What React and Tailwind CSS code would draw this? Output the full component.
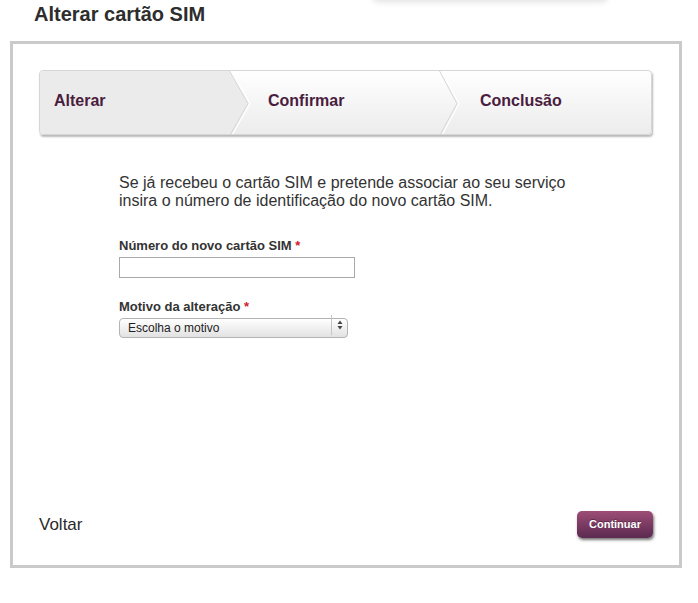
import React from 'react';

const StepBar = () => {
  return (
    <div className="relative h-[65px] w-[613px] rounded-[4px] border border-[#d6d6d6] bg-gradient-to-b from-white to-[#ececec] shadow-[1px_2px_2px_rgba(0,0,0,0.28)] overflow-hidden">
      {/* active step fill and chevron separators */}
      <svg className="absolute inset-0" width="613" height="65" viewBox="0 0 613 65">
        <polygon points="0,0 189,0 208,32.5 189,65 0,65" fill="#ebebeb" />
        <polyline points="189,-1 208,32.5 189,66" fill="none" stroke="#d4d4d4" strokeWidth="1" />
        <polyline points="191,-1 210,32.5 191,66" fill="none" stroke="#ffffff" strokeWidth="1.2" />
        <polyline points="399,-1 417,32.5 399,66" fill="none" stroke="#d4d4d4" strokeWidth="1" />
        <polyline points="401,-1 419,32.5 401,66" fill="none" stroke="#ffffff" strokeWidth="1.2" />
      </svg>
      <div className="relative flex h-full items-center pb-[4px] text-[16px] font-bold text-[#4a1d3e]">
        <div className="w-[228px] pl-[14px]">Alterar</div>
        <div className="w-[212px]">Confirmar</div>
        <div className="flex-1">Conclusão</div>
      </div>
    </div>
  );
};

const App = () => {
  return (
    <div className="relative min-h-[603px] bg-white font-['Liberation_Sans',Arial,sans-serif] text-[#333]">
      {/* shadow of a menu sitting above the page */}
      <div className="absolute left-[372px] top-[-20px] h-[20px] w-[236px] rounded-b-[6px] bg-white shadow-[0_2px_6px_rgba(0,0,0,0.12)]" />

      <h1 className="h-[41px] pl-[34px] pt-[2px] text-[20px] font-bold leading-[24px] text-[#2d2d2d]">
        Alterar cartão SIM
      </h1>

      <div className="ml-[10px] flex h-[527px] w-[672px] flex-col border-[3px] border-[#cacaca] px-[26px] pt-[26px] pb-[27px]">
        <StepBar />

        <div className="pl-[80px]">
          <p className="mt-[39px] text-[16px] leading-[18px] text-[#333]">
            Se já recebeu o cartão SIM e pretende associar ao seu serviço
            <br />
            insira o número de identificação do novo cartão SIM.
          </p>

          <label htmlFor="sim" className="mt-[28px] block text-[13px] font-bold leading-[16px] text-[#333]">
            Número do novo cartão SIM <span className="text-[#d0202a]">*</span>
          </label>
          <input
            id="sim"
            type="text"
            className="mt-[3px] block h-[21px] w-[236px] border border-[#a9a9a9] bg-white outline-none"
          />

          <label htmlFor="motivo" className="mt-[21px] block text-[13px] font-bold leading-[16px] text-[#333]">
            Motivo da alteração <span className="text-[#d0202a]">*</span>
          </label>
          <div className="relative h-[20px] w-[229px]">
            <select
              id="motivo"
              className="h-full w-full appearance-none rounded-[4px] border border-[#b3b3b3] bg-gradient-to-b from-white to-[#e2e2e2] pl-[8px] text-[12px] leading-[18px] text-[#222] outline-none"
              defaultValue=""
            >
              <option value="">Escolha o motivo</option>
            </select>
            <span className="pointer-events-none absolute right-0 top-0 flex h-full w-[17px] items-center justify-center border-l border-[#c4c4c4]">
              <svg width="6" height="10" viewBox="0 0 6 10">
                <polygon points="3,0.5 5.5,4 0.5,4" fill="#444" />
                <polygon points="0.5,6 5.5,6 3,9.5" fill="#444" />
              </svg>
            </span>
          </div>
        </div>

        <div className="mt-auto flex items-center justify-between">
          <a href="#" className="text-[17px] leading-[20px] text-[#2a2a2a]">Voltar</a>
          <button
            type="button"
            className="h-[27px] w-[76px] rounded-[5px] bg-gradient-to-b from-[#9d4d76] to-[#5c2a50] text-[11px] font-bold text-white shadow-[1px_2px_3px_rgba(0,0,0,0.55)] [text-shadow:0_-1px_0_rgba(0,0,0,0.35)]"
          >
            Continuar
          </button>
        </div>
      </div>
    </div>
  );
};

export default App;
